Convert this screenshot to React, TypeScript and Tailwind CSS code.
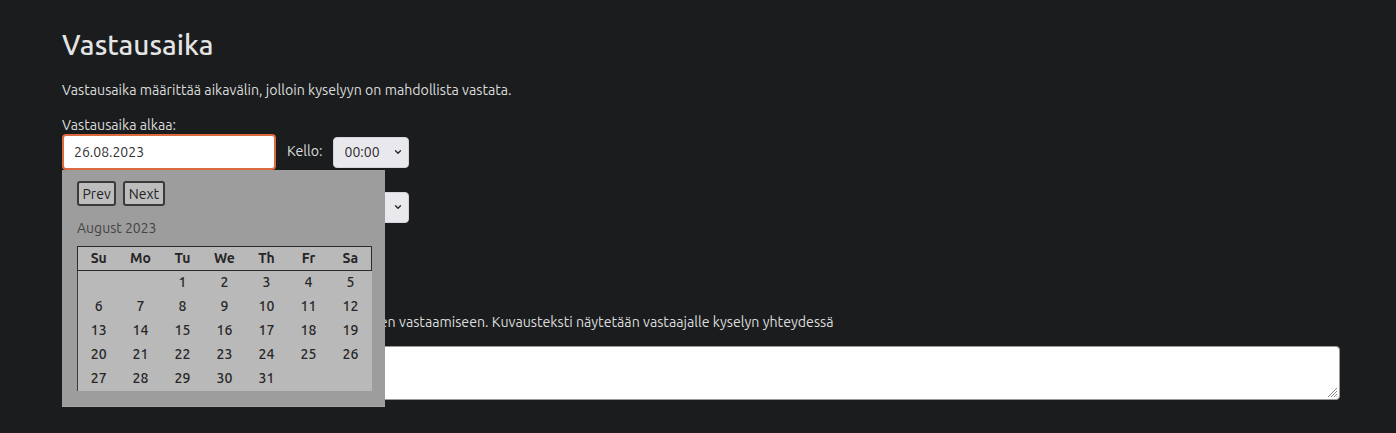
import React from "react"

const font = { fontFamily: "Ubuntu, 'Open Sans', 'Noto Sans', sans-serif" }

const weeks: (number | null)[][] = [
  [null, null, 1, 2, 3, 4, 5],
  [6, 7, 8, 9, 10, 11, 12],
  [13, 14, 15, 16, 17, 18, 19],
  [20, 21, 22, 23, 24, 25, 26],
  [27, 28, 29, 30, 31, null, null],
]

function Chevron() {
  return (
    <svg width="10" height="10" viewBox="0 0 10 10" className="pointer-events-none absolute right-[6px] top-1/2 -translate-y-1/2">
      <path d="M2.5 3.8 L5 6.3 L7.5 3.8" fill="none" stroke="#2b2b2b" strokeWidth="1.4" strokeLinecap="round" strokeLinejoin="round" />
    </svg>
  )
}

function TimeSelect() {
  return (
    <div className="relative ml-[10px]">
      <select
        defaultValue="00:00"
        className="h-[31px] w-[76px] appearance-none rounded-[4px] border border-[#d4d4dc] bg-[#e9e9ed] pl-[11px] text-[14px] text-[#2b2b2b] outline-none"
        style={font}
      >
        <option>00:00</option>
      </select>
      <Chevron />
    </div>
  )
}

function Calendar() {
  return (
    <div className="absolute left-0 top-full z-10 h-[237px] w-[323px] border-b border-[#a8a8a8] bg-[#9d9d9d] px-[15px] pt-[11px]">
      <div className="flex gap-[7px]">
        <button className="h-[25px] rounded-[3px] border-2 border-[#3a3a3a] bg-[#bdbdbd] px-[3.5px] text-[14px] leading-none text-[#222]">Prev</button>
        <button className="h-[25px] rounded-[3px] border-2 border-[#3a3a3a] bg-[#bdbdbd] px-[3.5px] text-[14px] leading-none text-[#222]">Next</button>
      </div>
      <div className="mt-[13px] text-[14px] leading-[18px] text-[#444]">August 2023</div>
      <table className="mt-[9px] w-[294px] table-fixed border-collapse border-l border-[#3c3c3c] bg-[#b9b9b9] text-[14px] text-[#262626]">
        <thead>
          <tr className="h-[24px] border border-[#2a2a2a]">
            {["Su", "Mo", "Tu", "We", "Th", "Fr", "Sa"].map((d) => (
              <th key={d} className="w-[42px] p-0 text-center font-bold">{d}</th>
            ))}
          </tr>
        </thead>
        <tbody>
          {weeks.map((w, i) => (
            <tr key={i} className="h-[24px]">
              {w.map((d, j) => (
                <td key={j} className="p-0 text-center font-medium">{d ?? ""}</td>
              ))}
            </tr>
          ))}
        </tbody>
      </table>
    </div>
  )
}

export default function App() {
  return (
    <div className="h-[433px] w-full bg-[#1b1c1e] pl-[62px] pr-[56px] pt-[28px] text-[#dcdcdc]" style={font}>
      <h2 className="text-[28px] font-medium leading-[34px] text-[#e4e4e4]">Vastausaika</h2>
      <p className="mt-[19px] text-[14.2px] leading-[18px]">
        Vastausaika määrittää aikavälin, jolloin kyselyyn on mahdollista vastata.
      </p>

      <label className="mt-[17px] block text-[14.2px] leading-[18px]">Vastausaika alkaa:</label>
      <div className="flex items-center">
        <div className="relative">
          <input
            defaultValue="26.08.2023"
            className="h-[36px] w-[214px] rounded-[4px] border-2 border-[#dc6a3f] bg-white px-[10px] text-[14px] text-[#333] outline-none"
            style={font}
          />
          <Calendar />
        </div>
        <span className="ml-[11px] text-[14.2px]">Kello:</span>
        <TimeSelect />
      </div>

      <label className="mt-[1px] block text-[14.2px] leading-[18px]">Vastausaika päättyy:</label>
      <div className="flex items-center">
        <input
          defaultValue=""
          className="h-[36px] w-[214px] rounded-[4px] border border-[#aaa] bg-white px-[10px] text-[14px] text-[#333] outline-none"
          style={font}
        />
        <span className="ml-[11px] text-[14.2px]">Kello:</span>
        <TimeSelect />
      </div>

      <h3 className="mt-[34px] text-[22px] font-medium leading-[28px] text-[#e4e4e4]">Kuvaus</h3>
      <p className="mt-[26px] text-[14.2px] leading-[18px]">
        Kuvauksella voit antaa lisäksi ohjeita kyselyyn liittyen vastaamiseen. Kuvausteksti näytetään vastaajalle kyselyn yhteydessä
      </p>
      <div className="relative mt-[15px]">
        <textarea
          className="block h-[54px] w-full resize-none rounded-[4px] border border-[#9a9a9a] bg-white px-[10px] py-[6px] text-[14px] text-[#333] outline-none"
          style={font}
        />
        <svg width="12" height="12" viewBox="0 0 12 12" className="pointer-events-none absolute bottom-[2px] right-[2px]">
          <path d="M11 2 L2 11 M11 5 L5 11 M11 8 L8 11 M11 10.5 L10.5 11" stroke="#8a8a8a" strokeWidth="1" />
        </svg>
      </div>
    </div>
  )
}
